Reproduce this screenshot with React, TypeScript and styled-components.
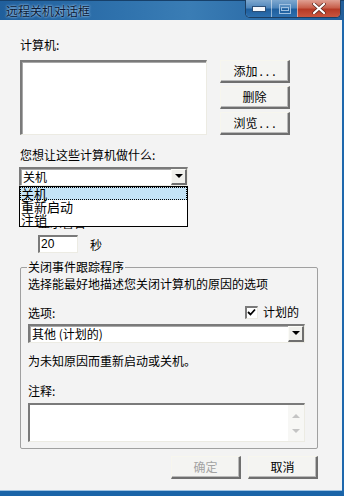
import React from 'react';
import styled, { createGlobalStyle } from 'styled-components';

const GlobalStyle = createGlobalStyle`
  html, body {
    margin: 0;
    padding: 0;
    background: #f3f3f3;
  }
  body {
    font-family: "Noto Sans CJK SC", "Liberation Sans", sans-serif;
    font-size: 12px;
    color: #000;
  }
`;

const Window = styled.div`
  width: 344px;
  height: 496px;
  display: flex;
  flex-direction: column;
  overflow: hidden;
  background: #f3f3f3;
`;

const TitleBar = styled.div`
  height: 20px;
  flex: none;
  display: flex;
  align-items: flex-start;
  justify-content: space-between;
  background: linear-gradient(90deg, #205f9c 0%, #2f72ad 35%, #3a7db5 55%, #2a6aa6 80%, #235f9b 100%);
  border-top: 1px solid #17406a;
  box-sizing: border-box;
`;

const Title = styled.span`
  margin: 3px 0 0 6px;
  font-size: 12px;
  line-height: 14px;
  color: #0a1a36;
  text-shadow: 0 0 2px #9fc7ea, 0 0 3px #9fc7ea;
`;

const Controls = styled.div`
  display: flex;
  margin-right: 3px;
  margin-top: -1px;
  border: 1px solid #1d3f63;
  border-top: none;
  border-radius: 0 0 5px 5px;
  overflow: hidden;
  box-shadow: inset 0 0 0 1px rgba(255, 255, 255, 0.55);
`;

const CtrlButton = styled.div<{ $w: number; $close?: boolean }>`
  width: ${p => p.$w}px;
  height: 17px;
  display: flex;
  align-items: center;
  justify-content: center;
  box-sizing: border-box;
  border-left: 1px solid rgba(255, 255, 255, 0.5);
  &:first-child {
    border-left: none;
  }
  background: ${p =>
    p.$close
      ? 'linear-gradient(180deg, #e0a093 0%, #c8604c 45%, #b63a26 55%, #c8553f 100%)'
      : 'linear-gradient(180deg, #7ea8cf 0%, #4f86bb 45%, #1f5f9e 55%, #2d6fae 100%)'};
`;

const Frame = styled.div`
  flex: 1;
  display: flex;
  flex-direction: column;
  padding: 18px 22px 0 20px;
  border-right: 2px solid #1e68ad;
  border-bottom: 5px solid #1a64a8;
  box-shadow: inset 0 -1px 0 #9ec2e2;
  background: #f3f3f3;
`;

const Label = styled.div<{ $mt?: number; $pl?: number }>`
  margin-top: ${p => p.$mt ?? 0}px;
  padding-left: ${p => p.$pl ?? 0}px;
  height: 14px;
  line-height: 14px;
  white-space: nowrap;
`;

const TopRow = styled.div`
  margin-top: 8px;
  display: flex;
  gap: 13px;
`;

const Sunken = styled.div<{ $w: number; $h: number }>`
  width: ${p => p.$w}px;
  height: ${p => p.$h}px;
  box-sizing: border-box;
  background: #fff;
  border-style: solid;
  border-width: 2px 1px 1px 2px;
  border-color: #7a7a7a #ecebe3 #ecebe3 #7a7a7a;
  box-shadow: inset 1px 1px 0 #a8a8a8;
`;

const ButtonColumn = styled.div`
  display: flex;
  flex-direction: column;
  gap: 3px;
`;

const PushButton = styled.div<{ $disabled?: boolean }>`
  width: 70px;
  height: 23px;
  box-sizing: border-box;
  display: flex;
  align-items: center;
  justify-content: center;
  background: #f4f4f2;
  border-style: solid;
  border-width: 1px 2px 2px 1px;
  border-color: #f7f6ee #6f6f6f #6f6f6f #f7f6ee;
  box-shadow: inset -1px -1px 0 #b9b9b9;
  color: ${p => (p.$disabled ? '#a3a3a3' : '#000')};
  line-height: 14px;
  white-space: nowrap;
`;

const Dots = styled.span`
  letter-spacing: 3px;
  margin-left: 2px;
  margin-right: -3px;
`;

const ComboWrap = styled.div<{ $w: number; $mt: number; $ml?: number }>`
  position: relative;
  width: ${p => p.$w}px;
  margin-top: ${p => p.$mt}px;
  margin-left: ${p => p.$ml ?? 0}px;
`;

const ComboBox = styled.div`
  height: 19px;
  box-sizing: border-box;
  display: flex;
  align-items: center;
  background: #fff;
  border-style: solid;
  border-width: 2px 1px 1px 2px;
  border-color: #7a7a7a #ecebe3 #ecebe3 #7a7a7a;
  box-shadow: inset 1px 1px 0 #a8a8a8;
`;

const ComboText = styled.span`
  flex: 1;
  padding-left: 2px;
  line-height: 14px;
  white-space: nowrap;
`;

const ArrowButton = styled.div`
  width: 16px;
  height: 16px;
  box-sizing: border-box;
  display: flex;
  align-items: center;
  justify-content: center;
  background: #f0f0ec;
  border-style: solid;
  border-width: 1px 2px 2px 1px;
  border-color: #fbfbf7 #6f6f6f #6f6f6f #fbfbf7;
  margin-top: -1px;
`;

const Arrow = styled.div<{ $color?: string; $up?: boolean }>`
  width: 0;
  height: 0;
  border-left: 4px solid transparent;
  border-right: 4px solid transparent;
  ${p =>
    p.$up
      ? `border-bottom: 4px solid ${p.$color ?? '#000'};`
      : `border-top: 4px solid ${p.$color ?? '#000'};`}
`;

const DropList = styled.div`
  position: absolute;
  top: 19px;
  left: 0;
  width: 100%;
  box-sizing: border-box;
  border: 1px solid #000;
  background: #fff;
  z-index: 2;
`;

const DropItem = styled.div<{ $active?: boolean }>`
  height: 13px;
  line-height: 13px;
  font-size: 13px;
  padding-left: 1px;
  box-sizing: border-box;
  white-space: nowrap;
  background: ${p => (p.$active ? '#c4e3f6' : 'transparent')};
  outline: ${p => (p.$active ? '1px dotted #000' : 'none')};
  outline-offset: -1px;
`;

const WarnRow = styled.div`
  margin-top: 5px;
  padding-left: 18px;
  display: flex;
  align-items: center;
  gap: 12px;
`;

const SmallInput = styled.div`
  width: 40px;
  height: 18px;
  box-sizing: border-box;
  background: #fff;
  border-style: solid;
  border-width: 2px 1px 1px 2px;
  border-color: #7a7a7a #ecebe3 #ecebe3 #7a7a7a;
  font-family: "Liberation Sans", sans-serif;
  font-size: 12px;
  line-height: 14px;
  padding-left: 1px;
`;

const Group = styled.fieldset`
  margin: 7px 0 0 0;
  padding: 0 12px 6px 7px;
  width: 298px;
  box-sizing: border-box;
  border: 1px solid #a0a0a0;
  border-radius: 2px;
`;

const Legend = styled.legend`
  padding: 0 1px;
  margin-left: -1px;
  line-height: 14px;
  font-size: 12px;
`;

const OptionRow = styled.div`
  margin-top: 14px;
  height: 14px;
  display: flex;
  align-items: center;
  justify-content: space-between;
`;

const CheckLabel = styled.div`
  display: flex;
  align-items: center;
  gap: 5px;
  margin-right: 6px;
  line-height: 14px;
`;

const CheckBox = styled.div`
  width: 13px;
  height: 13px;
  box-sizing: border-box;
  background: #fff;
  border-style: solid;
  border-width: 2px 1px 1px 2px;
  border-color: #7a7a7a #ecebe3 #ecebe3 #7a7a7a;
  display: flex;
  align-items: center;
  justify-content: center;
`;

const Memo = styled.div`
  margin-top: 5px;
  width: 277px;
  height: 39px;
  box-sizing: border-box;
  display: flex;
  justify-content: flex-end;
  background: #fff;
  border-style: solid;
  border-width: 2px 1px 1px 2px;
  border-color: #7a7a7a #ecebe3 #ecebe3 #7a7a7a;
`;

const ScrollBar = styled.div`
  width: 16px;
  display: flex;
  flex-direction: column;
  justify-content: space-between;
  align-items: center;
  padding: 9px 0 8px;
  background: #f7f7f5;
`;

const Footer = styled.div`
  margin-top: 7px;
  width: 298px;
  display: flex;
  justify-content: flex-end;
  gap: 7px;
`;

export default function App() {
  return (
    <>
      <GlobalStyle />
      <Window>
        <TitleBar>
          <Title>远程关机对话框</Title>
          <Controls>
            <CtrlButton $w={25}>
              <svg width="14" height="6" viewBox="0 0 14 6">
                <rect x="0.5" y="0.5" width="13" height="5" fill="#f4f7fb" stroke="#2b4f78" />
              </svg>
            </CtrlButton>
            <CtrlButton $w={26}>
              <svg width="12" height="10" viewBox="0 0 12 10">
                <rect x="0.5" y="0.5" width="11" height="9" fill="none" stroke="#9fc0e0" />
                <rect x="2.5" y="3.5" width="7" height="3" fill="none" stroke="#9fc0e0" />
              </svg>
            </CtrlButton>
            <CtrlButton $w={43} $close>
              <svg width="14" height="11" viewBox="0 0 14 11">
                <path d="M2 1 L12 10 M12 1 L2 10" stroke="#5b2a22" strokeWidth="3.6" strokeLinecap="round" />
                <path d="M2 1 L12 10 M12 1 L2 10" stroke="#fff" strokeWidth="2.2" strokeLinecap="round" />
              </svg>
            </CtrlButton>
          </Controls>
        </TitleBar>
        <Frame>
          <Label>计算机:</Label>
          <TopRow>
            <Sunken $w={187} $h={75} />
            <ButtonColumn>
              <PushButton>
                添加<Dots>...</Dots>
              </PushButton>
              <PushButton>删除</PushButton>
              <PushButton>
                浏览<Dots>...</Dots>
              </PushButton>
            </ButtonColumn>
          </TopRow>
          <Label $mt={13}>您想让这些计算机做什么:</Label>
          <ComboWrap $w={169} $mt={5} $ml={-1}>
            <ComboBox>
              <ComboText>关机</ComboText>
              <ArrowButton>
                <Arrow />
              </ArrowButton>
            </ComboBox>
            <DropList>
              <DropItem $active>关机</DropItem>
              <DropItem>重新启动</DropItem>
              <DropItem>注销</DropItem>
            </DropList>
          </ComboWrap>
          <Label $mt={30} $pl={18}>
            显示警告
          </Label>
          <WarnRow>
            <SmallInput>20</SmallInput>
            <span>秒</span>
          </WarnRow>
          <Group>
            <Legend>关闭事件跟踪程序</Legend>
            <Label $mt={3}>选择能最好地描述您关闭计算机的原因的选项</Label>
            <OptionRow>
              <span>选项:</span>
              <CheckLabel>
                <CheckBox>
                  <svg width="9" height="9" viewBox="0 0 9 9">
                    <path d="M1 4 L3.5 6.5 L8 1.5" stroke="#000" strokeWidth="1.8" fill="none" />
                  </svg>
                </CheckBox>
                <span>计划的</span>
              </CheckLabel>
            </OptionRow>
            <ComboWrap $w={277} $mt={5}>
              <ComboBox>
                <ComboText>其他 (计划的)</ComboText>
                <ArrowButton>
                  <Arrow />
                </ArrowButton>
              </ComboBox>
            </ComboWrap>
            <Label $mt={11}>为未知原因而重新启动或关机。</Label>
            <Label $mt={16}>注释:</Label>
            <Memo>
              <ScrollBar>
                <Arrow $up $color="#c4c4c4" />
                <Arrow $color="#c4c4c4" />
              </ScrollBar>
            </Memo>
          </Group>
          <Footer>
            <PushButton $disabled>确定</PushButton>
            <PushButton>取消</PushButton>
          </Footer>
        </Frame>
      </Window>
    </>
  );
}
